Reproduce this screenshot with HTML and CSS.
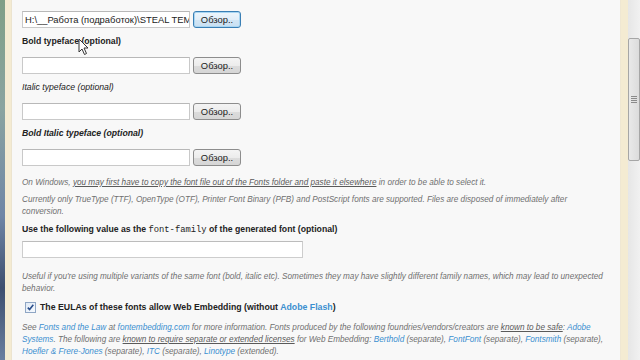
FILE: index.html
```html
<!DOCTYPE html>
<html lang="en">

<head>
    <meta charset="UTF-8">
    <title>Font upload</title>
    <link rel="stylesheet" href="styles.css">
</head>

<body>
    <div class="window">
        <div class="desktop"></div>
        <div class="edge"></div>

        <main class="page">
            <div class="field first">
                <label class="field-label">Regular typeface</label>
                <div class="file-row">
                    <span class="file-input">H:\__Работа (подработок)\STEAL TEMPLATE</span>
                    <button class="browse focused">Обзор..</button>
                </div>
            </div>

            <div class="field">
                <label class="field-label">Bold typeface (optional)</label>
                <div class="file-row">
                    <span class="file-input"></span>
                    <button class="browse">Обзор..</button>
                </div>
            </div>

            <div class="field">
                <label class="field-label italic">Italic typeface (optional)</label>
                <div class="file-row">
                    <span class="file-input"></span>
                    <button class="browse">Обзор..</button>
                </div>
            </div>

            <div class="field">
                <label class="field-label bold-italic">Bold Italic typeface (optional)</label>
                <div class="file-row">
                    <span class="file-input"></span>
                    <button class="browse">Обзор..</button>
                </div>
            </div>

            <p class="note note-windows">On Windows, <u>you may first have to copy the font file out of the Fonts folder and paste it elsewhere</u> in order to be able to select it.</p>
            <p class="note">Currently only TrueType (TTF), OpenType (OTF), Printer Font Binary (PFB) and PostScript fonts are supported. Files are disposed of immediately after conversion.</p>

            <label class="field-label family-label">Use the following value as the <code>font-family</code> of the generated font (optional)</label>
            <span class="text-input"></span>

            <p class="note note-useful">Useful if you're using multiple variants of the same font (bold, italic etc). Sometimes they may have slightly different family names, which may lead to unexpected behavior.</p>

            <div class="check-row">
                <svg class="checkbox" width="11" height="11" viewBox="0 0 11 11">
                    <defs>
                        <linearGradient id="cb" x1="0" y1="0" x2="1" y2="1">
                            <stop offset="0" stop-color="#dfe9f5"/>
                            <stop offset="1" stop-color="#f8fbff"/>
                        </linearGradient>
                    </defs>
                    <rect x="0.5" y="0.5" width="10" height="10" fill="url(#cb)" stroke="#8fa6c4"/>
                    <path d="M2.8 5.6 L4.6 7.6 L8.3 2.8" fill="none" stroke="#2b4f8c" stroke-width="1.6"/>
                </svg>
                <span class="check-label">The EULAs of these fonts allow Web Embedding (without <a href="#">Adobe Flash</a>)</span>
            </div>

            <p class="note note-see">See <a href="#">Fonts and the Law</a> at <a href="#">fontembedding.com</a> for more information. Fonts produced by the following foundries/vendors/creators are <u>known to be safe</u>: <a href="#">Adobe Systems</a>. The following are <u>known to require separate or extended licenses</u> for Web Embedding: <a href="#">Berthold</a> (separate), <a href="#">FontFont</a> (separate), <a href="#">Fontsmith</a> (separate), <a href="#">Hoefler &amp; Frere-Jones</a> (separate), <a href="#">ITC</a> (separate), <a href="#">Linotype</a> (extended).</p>

            <svg class="cursor" width="12" height="18" viewBox="0 0 12 18">
                <path d="M1 1 L1 14 L4 11 L6.5 16.5 L8.5 15.5 L6 10 L10 10 Z" fill="#fff" stroke="#333" stroke-width="1"/>
            </svg>
        </main>

        <div class="edge edge-right"></div>
        <div class="scrollbar">
            <div class="scroll-thumb">
                <span class="grip"></span>
            </div>
        </div>
    </div>
</body>

</html>
```

FILE: styles.css
```css
/* Reset and Base Styling */
* {
    margin: 0;
    padding: 0;
    box-sizing: border-box;
}

body {
    width: 640px;
    height: 360px;
    overflow: hidden;
    font-family: "Liberation Sans", Arial, sans-serif;
    color: #222;
    background: #f8f8f8;
}

.window {
    display: flex;
    height: 360px;
}

.desktop {
    width: 5px;
    background: linear-gradient(180deg, #7f9f86 0%, #8aa4a0 30%, #6f86a6 60%, #3d4f6e 80%, #6a7fa0 100%);
}

.edge {
    width: 7px;
    background: #f4ebd2;
    border-right: 1px solid #ece4cf;
}

.edge-right {
    width: 8px;
    border-right: none;
    border-left: 1px solid #efe7d3;
}

/* Page content */
.page {
    position: relative;
    display: flex;
    flex-direction: column;
    align-items: flex-start;
    flex: 1;
    background: #f8f8f8;
    padding: 0 10px;
    overflow: hidden;
}

.field {
    margin-bottom: 7px;
}

.field.first {
    margin-top: -11px;
}

.field-label {
    display: block;
    height: 12px;
    line-height: 12px;
    font-size: 8.7px;
    font-weight: bold;
    white-space: nowrap;
}

.field-label.italic {
    font-weight: normal;
    font-style: italic;
}

.field-label.bold-italic {
    font-style: italic;
}

.file-row {
    display: flex;
    gap: 3px;
    margin-top: 10px;
    height: 17px;
}

.file-input {
    width: 168px;
    height: 17px;
    background: #fff;
    border: 1px solid #c9c9c9;
    border-top-color: #b8b8b8;
    font-size: 9.4px;
    line-height: 15px;
    padding-left: 2px;
    white-space: nowrap;
    overflow: hidden;
    color: #222;
}

.browse {
    width: 48px;
    height: 17px;
    font-family: "Liberation Sans", Arial, sans-serif;
    font-size: 9.4px;
    color: #222;
    background: linear-gradient(180deg, #f4f4f4 0%, #ececec 50%, #dcdcdc 51%, #d6d6d6 100%);
    border: 1px solid #8d8d8d;
    border-radius: 3px;
}

.browse.focused {
    border-color: #3a7fb5;
    box-shadow: inset 0 0 0 1px #a9d6f2;
    background: linear-gradient(180deg, #eef6fc 0%, #e2eef8 50%, #d2e6f5 51%, #c9e0f2 100%);
}

.note {
    font-size: 8.2px;
    line-height: 12px;
    font-style: italic;
    color: #707070;
    max-width: 586px;
}

.note u {
    color: #5a5a5a;
}

.note a,
.check-label a {
    color: #3b8fd0;
    text-decoration: none;
}

.note-windows {
    margin-top: 4px;
    margin-bottom: 5px;
}

.family-label {
    margin-top: 5px;
    font-size: 8.7px;
}

.family-label code {
    font-family: "Liberation Mono", "Courier New", monospace;
    font-weight: normal;
    font-size: 8.8px;
}

.text-input {
    display: block;
    width: 281px;
    height: 17px;
    margin-top: 6px;
    background: #fff;
    border: 1px solid #cdcdcd;
    border-top-color: #bcbcbc;
}

.note-useful {
    margin-top: 13px;
}

.check-row {
    display: flex;
    align-items: center;
    gap: 4px;
    height: 14px;
    margin-top: 5px;
    padding-left: 3px;
}

.checkbox {
    flex-shrink: 0;
}

.check-label {
    font-size: 8.75px;
    font-weight: bold;
    white-space: nowrap;
}

.note-see {
    margin-top: 8px;
}

.cursor {
    position: absolute;
    left: 66px;
    top: 38px;
}

/* Scrollbar */
.scrollbar {
    width: 12px;
    background: linear-gradient(90deg, #e6e6e6, #f1f1f1);
    padding-top: 38px;
}

.scroll-thumb {
    display: flex;
    align-items: center;
    justify-content: center;
    height: 123px;
    background: linear-gradient(90deg, #e9e9e9, #dcdcdc);
    border: 1px solid #a6a6a6;
    border-radius: 2px;
}

.grip {
    width: 6px;
    height: 7px;
    background: repeating-linear-gradient(180deg, #8a8a8a 0 1px, transparent 1px 2px);
}
```
